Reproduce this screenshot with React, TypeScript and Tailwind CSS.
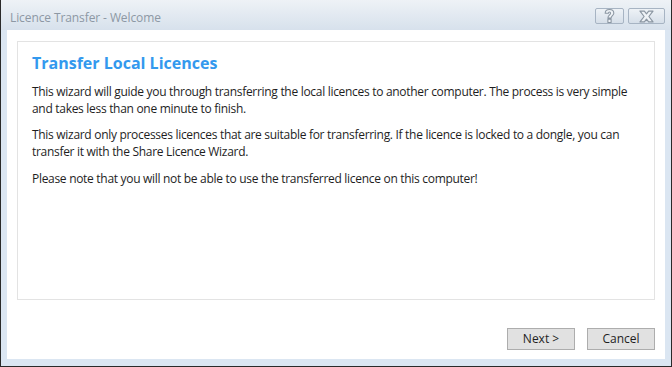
export default function App() {
  return (
    <div
      className="flex h-[367px] w-[672px] flex-col overflow-hidden border-x border-b border-[#2a2a2a] bg-[#dbe6f2]"
      style={{ fontFamily: '"Open Sans", "Noto Sans", sans-serif' }}
    >
      {/* title bar */}
      <div className="flex h-[30px] items-start justify-between bg-gradient-to-b from-[#eef2f6] to-[#d7e1ec] pl-[9px] pr-[6px]">
        <span className="pt-[10px] text-[12px] leading-[16px] tracking-[-0.1px] text-[#8d98a4]">
          Licence Transfer - Welcome
        </span>
        <div className="flex gap-[4px] pt-[8px]">
          <button className="flex h-[16px] w-[29px] items-center justify-center rounded-[2px] border border-[#a7b4c3] bg-gradient-to-b from-[#eef2f6] to-[#d6dfe9]">
            <svg width="11" height="14" viewBox="0 0 10 13">
              <path
                d="M1 4 C1 1 3 0.5 5 0.5 C7.5 0.5 9 2 9 4 C9 6 6.5 6.5 6.5 8.5 L3.5 8.5 C3.5 5.8 6 5.5 6 4 C6 3 5.4 2.8 5 2.8 C4.3 2.8 4 3.4 4 4 Z M3.5 9.5 L6.5 9.5 L6.5 12.5 L3.5 12.5 Z"
                fill="#eef2f6"
                stroke="#8b96a2"
                strokeWidth="1"
                strokeLinejoin="round"
              />
            </svg>
          </button>
          <button className="flex h-[16px] w-[37px] items-center justify-center rounded-[2px] border border-[#a7b4c3] bg-gradient-to-b from-[#eef2f6] to-[#d6dfe9]">
            <svg width="19" height="13" viewBox="0 0 16 12">
              <path
                d="M2 1 L6 1 L8 3.5 L10 1 L14 1 L10.2 6 L14 11 L10 11 L8 8.5 L6 11 L2 11 L5.8 6 Z"
                fill="#eef2f6"
                stroke="#8b96a2"
                strokeWidth="1.1"
                strokeLinejoin="round"
              />
            </svg>
          </button>
        </div>
      </div>

      {/* client area */}
      <div className="mx-[6px] mb-[7px] flex flex-1 flex-col bg-white px-[10px] pt-[11px]">
        <div className="h-[259px] border border-[#e3e3e3] px-[14px] pt-[10px] text-[12px] leading-[17px] tracking-[-0.3px] text-[#1e1e1e]">
          <h1 className="mb-[9px] text-[16px] font-bold leading-[22px] tracking-[0px] text-[#3399ee]">
            Transfer Local Licences
          </h1>
          <p className="mb-[9px]">
            This wizard will guide you through transferring the local licences to another computer. The process is very simple
            and takes less than one minute to finish.
          </p>
          <p className="mb-[10px]">
            This wizard only processes licences that are suitable for transferring. If the licence is locked to a dongle, you can
            transfer it with the Share Licence Wizard.
          </p>
          <p>Please note that you will not be able to use the transferred licence on this computer!</p>
        </div>
        <div className="flex justify-end gap-[12px] pt-[28px]">
          <button className="h-[22px] w-[68px] border border-[#adadad] bg-[#e1e1e1] text-[12px] text-[#1e1e1e]">Next &gt;</button>
          <button className="h-[22px] w-[68px] border border-[#adadad] bg-[#e1e1e1] text-[12px] text-[#1e1e1e]">Cancel</button>
        </div>
      </div>
    </div>
  );
}
